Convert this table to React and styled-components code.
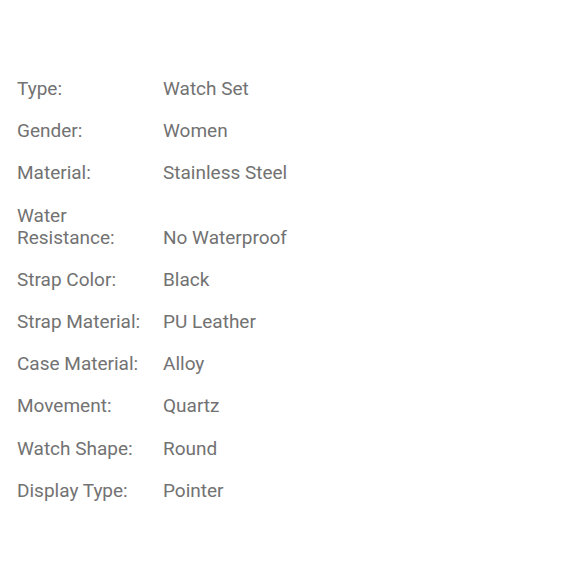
import React from 'react';
import styled, { createGlobalStyle } from 'styled-components';

const GlobalStyle = createGlobalStyle`
  html, body {
    margin: 0;
    padding: 0;
    background: #ffffff;
  }
  body {
    font-family: Roboto, "Liberation Sans", Arial, sans-serif;
  }
`;

const Page = styled.div`
  width: 580px;
  height: 580px;
  box-sizing: border-box;
  padding: 78px 17px 0 17px;
  background: #ffffff;
`;

const SpecTable = styled.dl`
  display: grid;
  grid-template-columns: 146px 1fr;
  row-gap: 20.2px;
  align-items: end;
  margin: 0;
  font-size: 19px;
  line-height: 22px;
  color: #727272;
`;

const Label = styled.dt`
  margin: 0;
  padding-right: 4px;
`;

const Value = styled.dd`
  margin: 0;
`;

const specs = [
  ['Type:', 'Watch Set'],
  ['Gender:', 'Women'],
  ['Material:', 'Stainless Steel'],
  ['Water Resistance:', 'No Waterproof'],
  ['Strap Color:', 'Black'],
  ['Strap Material:', 'PU Leather'],
  ['Case Material:', 'Alloy'],
  ['Movement:', 'Quartz'],
  ['Watch Shape:', 'Round'],
  ['Display Type:', 'Pointer'],
];

const App = () => (
  <>
    <GlobalStyle />
    <Page>
      <SpecTable>
        {specs.map(([label, value]) => (
          <React.Fragment key={label}>
            <Label>{label}</Label>
            <Value>{value}</Value>
          </React.Fragment>
        ))}
      </SpecTable>
    </Page>
  </>
);

export default App;
